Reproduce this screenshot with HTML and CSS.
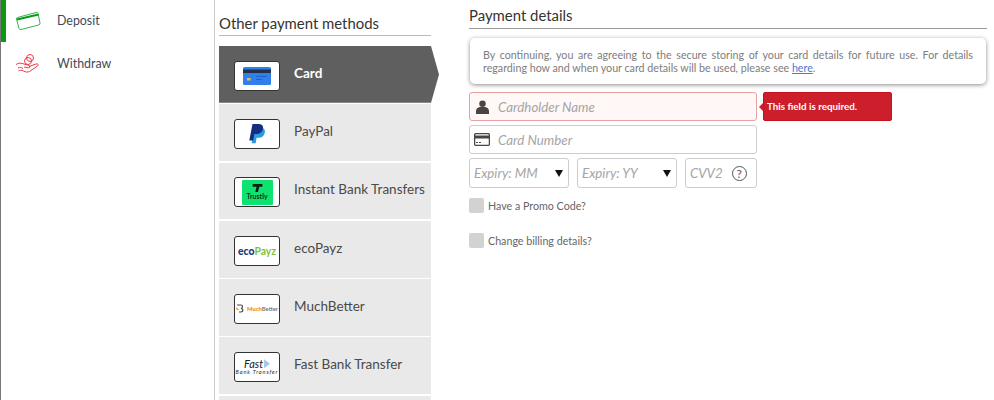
FILE: index.html
```html
<!DOCTYPE html>
<html lang="en">
<head>
    <meta charset="UTF-8">
    <title>Deposit</title>
    <link rel="stylesheet" href="styles.css">
</head>
<body>
    <div class="page">
        <!-- Left menu -->
        <nav class="side-menu">
            <a class="menu-item active">
                <svg class="menu-icon" width="26" height="22" viewBox="0 0 26 22" fill="none" stroke="#35b54a" stroke-width="1">
                    <path d="M2.500 7.500 21 2.500q1.500-.4 2 1l2 9.500q.3 1.500-1 1.900L6 19.500q-1.500.3-2-1L1.500 9q-.3-1.200 1-1.500Z"/>
                    <path d="M2 9.500 23.500 4.500" stroke="#0b9a1f" stroke-width="2"/>
                </svg>
                <span>Deposit</span>
            </a>
            <a class="menu-item">
                <svg class="menu-icon" width="26" height="22" viewBox="0 0 26 22" fill="none" stroke="#ee3a48" stroke-width="1">
                    <circle cx="15" cy="5" r="3.500"/>
                    <circle cx="13" cy="8" r="3.500"/>
                    <path d="M1 11.500c3-2 5-1.500 8-.5l5 1.500c1.500.5 1.200 2.500-.5 2.300L9 14"/>
                    <path d="M14 13.500l7-2.500c2-.5 3 1 1.500 2l-8 5.500c-2 1-4 .5-6-.5-2-1-3.500-1-5 0"/>
                    <path d="M3 15c2-1 3.500-.5 5 .5"/>
                </svg>
                <span>Withdraw</span>
            </a>
        </nav>

        <!-- Payment method list -->
        <section class="methods">
            <h2 class="section-title">Other payment methods</h2>
            <ul class="method-list">
                <li class="method selected">
                    <div class="logo-box">
                        <svg width="28" height="18" viewBox="0 0 28 18">
                            <rect width="28" height="18" rx="1.500" fill="#2f80ed"/>
                            <rect y="2.500" width="28" height="3.500" fill="#243044"/>
                            <rect x="4" y="11" width="3.500" height="2.500" fill="#f5b93a"/>
                            <rect x="13" y="9" width="11" height="1" fill="#1f62c4"/>
                            <rect x="13" y="12" width="6" height="1" fill="#1f62c4"/>
                        </svg>
                    </div>
                    <span class="method-name">Card</span>
                </li>
                <li class="method">
                    <div class="logo-box">
                        <svg width="17" height="21" viewBox="0 0 18 23">
                            <path d="M6 4h7c3 0 4.500 2 4 5-.5 4-3 6-6.500 6H8l-1 6H2.500Z" fill="#2a9be0"/>
                            <path d="M3.500 0H10c4 0 5.500 2 5 5-.6 4-3.500 6-7 6H5.500l-1.200 7H0Z" fill="#142f80"/>
                        </svg>
                    </div>
                    <span class="method-name">PayPal</span>
                </li>
                <li class="method">
                    <div class="logo-box">
                        <div class="trustly">
                            <svg width="11" height="8" viewBox="0 0 11 9"><path d="M0 0h11v3H7.500L6 9H3l1.400-6H0Z" fill="#0e1e14"/></svg>
                            <span>Trustly</span>
                        </div>
                    </div>
                    <span class="method-name">Instant Bank Transfers</span>
                </li>
                <li class="method">
                    <div class="logo-box">
                        <span class="eco">eco</span><span class="payz">Payz</span>
                    </div>
                    <span class="method-name">ecoPayz</span>
                </li>
                <li class="method">
                    <div class="logo-box">
                        <svg width="9" height="9" viewBox="0 0 9 9" fill="none" stroke-width="1.200">
                            <path d="M1 1h4c2 0 2 3 0 3.500 2.500 0 2.500 3.500 0 3.500H3" stroke="#4a4a4a"/>
                            <path d="M0 4l2.500 2" stroke="#f08a24"/>
                        </svg>
                        <span class="much">Much</span><span class="better">Better</span>
                    </div>
                    <span class="method-name">MuchBetter</span>
                </li>
                <li class="method">
                    <div class="logo-box fast-box">
                        <div class="fast">Fast<i class="fast-mark"></i></div>
                        <div class="fast-sub">Bank Transfer</div>
                    </div>
                    <span class="method-name">Fast Bank Transfer</span>
                </li>
                <li class="method"></li>
            </ul>
        </section>

        <!-- Card form -->
        <section class="details">
            <h2 class="section-title">Payment details</h2>
            <div class="notice">
                By continuing, you are agreeing to the secure storing of your card details for future use. For details regarding how and when your card details will be used, please see <a href="#">here</a>.
            </div>
            <form class="card-form">
                <div class="field error">
                    <svg class="field-icon person" width="13" height="14" viewBox="0 0 14 15" fill="#4a4541">
                        <circle cx="7" cy="4" r="3.500"/>
                        <path d="M0 15v-3c0-3 2-4 4-4.500h6c2 .5 4 1.500 4 4.500v3Z"/>
                    </svg>
                    <span class="placeholder">Cardholder Name</span>
                    <div class="tooltip">This field is required.</div>
                </div>
                <div class="field">
                    <svg class="field-icon" width="16" height="13" viewBox="0 0 16 13">
                        <rect x=".6" y=".6" width="14.800" height="11.800" rx="1.500" fill="#fff" stroke="#4a4541" stroke-width="1.300"/>
                        <rect y="2.500" width="16" height="3" fill="#4a4541"/>
                        <rect x="2" y="9" width="2" height="1" fill="#4a4541"/>
                        <rect x="5" y="9" width="2" height="1" fill="#4a4541"/>
                    </svg>
                    <span class="placeholder">Card Number</span>
                </div>
                <div class="field-row">
                    <div class="field select">
                        <span class="placeholder">Expiry: MM</span>
                        <i class="caret"></i>
                    </div>
                    <div class="field select">
                        <span class="placeholder">Expiry: YY</span>
                        <i class="caret"></i>
                    </div>
                    <div class="field cvv">
                        <span class="placeholder">CVV2</span>
                        <span class="help">?</span>
                    </div>
                </div>
                <label class="check promo"><i class="box"></i><span>Have a Promo Code?</span></label>
                <label class="check billing"><i class="box"></i><span>Change billing details?</span></label>
            </form>
        </section>
    </div>
</body>
</html>
```

FILE: styles.css
```css
/* Global Reset */
* {
    margin: 0;
    padding: 0;
    box-sizing: border-box;
    font-family: 'Lato', sans-serif;
}

body {
    background: #fff;
    overflow: hidden;
}

.page {
    display: flex;
    height: 400px;
    overflow: hidden;
}

/* Left menu */
.side-menu {
    width: 215px;
    flex-shrink: 0;
    border-left: 1px solid #777;
    border-right: 1px solid #ccc;
}

.menu-item {
    display: flex;
    align-items: center;
    height: 42px;
    padding-left: 14px;
    font-size: 12.400px;
    color: #3f4a5a;
    border-left: 5px solid transparent;
}

.menu-item.active {
    border-left-color: #0a9a0f;
}

.menu-item:nth-child(2) {
    margin-top: 1px;
}

.menu-item span {
    margin-bottom: 2px;
}

.menu-icon {
    margin-left: -5px;
    margin-right: 16px;
}

/* Section headings */
.section-title {
    font-size: 14.900px;
    font-weight: 400;
    color: #333;
}

/* Payment methods */
.methods {
    width: 220px;
    margin-left: 4px;
    flex-shrink: 0;
}

.methods .section-title {
    width: 212px;
    height: 36px;
    padding-top: 13px;
    line-height: 21px;
    border-bottom: 1px solid #bbb;
}

.method-list {
    list-style: none;
    margin-top: 10px;
}

.method {
    display: flex;
    align-items: center;
    width: 212px;
    height: 56.750px;
    margin-bottom: 1.500px;
    padding-left: 15px;
    background: #e9e9e9;
    font-size: 13.500px;
    color: #4a4a4a;
}

.method.selected {
    width: 220px;
    color: #fff;
    font-weight: 700;
    background: #5f5f5f;
    clip-path: polygon(0 0, 212px 0, 100% 50%, 212px 100%, 0 100%);
}

.method-name {
    margin-bottom: 3px;
}

.logo-box {
    display: flex;
    align-items: center;
    justify-content: center;
    width: 46px;
    height: 30px;
    margin-top: 3px;
    margin-right: 14px;
    background: #fff;
    border: 1.500px solid #333;
    border-radius: 3px;
    flex-shrink: 0;
}

.trustly {
    display: flex;
    flex-direction: column;
    align-items: center;
    justify-content: center;
    width: 31px;
    height: 25px;
    background: #0fe36f;
    border-radius: 1px;
}

.trustly span {
    font-size: 7px;
    line-height: 8px;
    font-weight: 700;
    color: #10301f;
}

.eco {
    font-size: 10.400px;
    font-weight: 900;
    color: #1a3a7a;
}

.payz {
    font-size: 10.400px;
    font-weight: 700;
    color: #7fbf3a;
}

.much {
    margin-left: 2px;
    font-size: 5.800px;
    font-weight: 900;
    color: #f08a24;
}

.better {
    font-size: 5.800px;
    font-weight: 700;
    color: #777;
}

.fast-box {
    flex-direction: column;
}

.fast {
    display: flex;
    align-items: center;
    font-size: 11px;
    line-height: 10px;
    font-weight: 400;
    font-style: italic;
    color: #222;
}

.fast-mark {
    width: 6px;
    height: 9px;
    margin-left: 1px;
    background: #9fc9e8;
    clip-path: polygon(0 0, 100% 50%, 0 100%);
}

.fast-sub {
    font-size: 5.500px;
    line-height: 7px;
    font-style: italic;
    font-weight: 400;
    letter-spacing: .9px;
    white-space: nowrap;
    color: #222;
}

/* Payment details */
.details {
    width: 518px;
    margin-left: 30px;
    flex-shrink: 0;
}

.details .section-title {
    height: 29px;
    padding-top: 5px;
    line-height: 21px;
    border-bottom: 1px solid #999;
}

.notice {
    width: 516px;
    height: 46px;
    margin: 9px 0 8px 1px;
    padding: 10px 13px 0;
    background: #fff;
    border-radius: 5px;
    box-shadow: 0 1px 4px rgba(0, 0, 0, 0.45);
    font-size: 10.700px;
    line-height: 13px;
    color: #7d7d7d;
    text-align: justify;
}

.notice a {
    color: #4a78d0;
}

.card-form {
    display: flex;
    flex-direction: column;
    gap: 4px;
    width: 288px;
}

.field {
    position: relative;
    display: flex;
    align-items: center;
    height: 29px;
    padding-left: 4px;
    background: #fff;
    border: 1px solid #ccc;
    border-radius: 3px;
}

.field.error {
    background: #fff8f7;
    border-color: #e8a0a0;
}

.field-icon {
    flex-shrink: 0;
    margin-right: 8px;
}

.field-icon.person {
    margin-left: 2px;
    margin-right: 9px;
}

.placeholder {
    font-size: 13.300px;
    font-style: italic;
    color: #a5a5a5;
}

.field-row {
    display: flex;
    gap: 8px;
    height: 30px;
}

.field-row .field {
    height: 30px;
}

.select {
    width: 100px;
    justify-content: space-between;
    padding-right: 5px;
}

.cvv {
    width: 72px;
}

.caret {
    width: 0;
    height: 0;
    border-left: 4.500px solid transparent;
    border-right: 4.500px solid transparent;
    border-top: 7px solid #111;
}

.help {
    display: flex;
    align-items: center;
    justify-content: center;
    width: 15px;
    height: 15px;
    margin-left: 9px;
    border: 1px solid #555;
    border-radius: 50%;
    font-size: 12px;
    color: #555;
}

/* Error bubble */
.tooltip {
    position: absolute;
    left: 293px;
    top: -1px;
    width: 129px;
    height: 29px;
    padding-left: 3px;
    background: #cc1f2b;
    border: 1px solid #c8101e;
    border-radius: 2px;
    font-size: 9.800px;
    font-weight: 700;
    line-height: 27px;
    color: #fff;
}

.tooltip::before {
    content: "";
    position: absolute;
    left: -5px;
    top: 10px;
    border-top: 4px solid transparent;
    border-bottom: 4px solid transparent;
    border-right: 4px solid #cc1f2b;
}

/* Checkboxes */
.check {
    display: flex;
    align-items: center;
    height: 15px;
    font-size: 10.700px;
    color: #666;
}

.check span {
    margin-bottom: 1px;
}

.box {
    width: 15px;
    height: 15px;
    margin-right: 4px;
    background: #d2d2d2;
    border-radius: 2px;
}

.promo {
    margin-top: 6px;
}

.billing {
    margin-top: 16px;
}
```
